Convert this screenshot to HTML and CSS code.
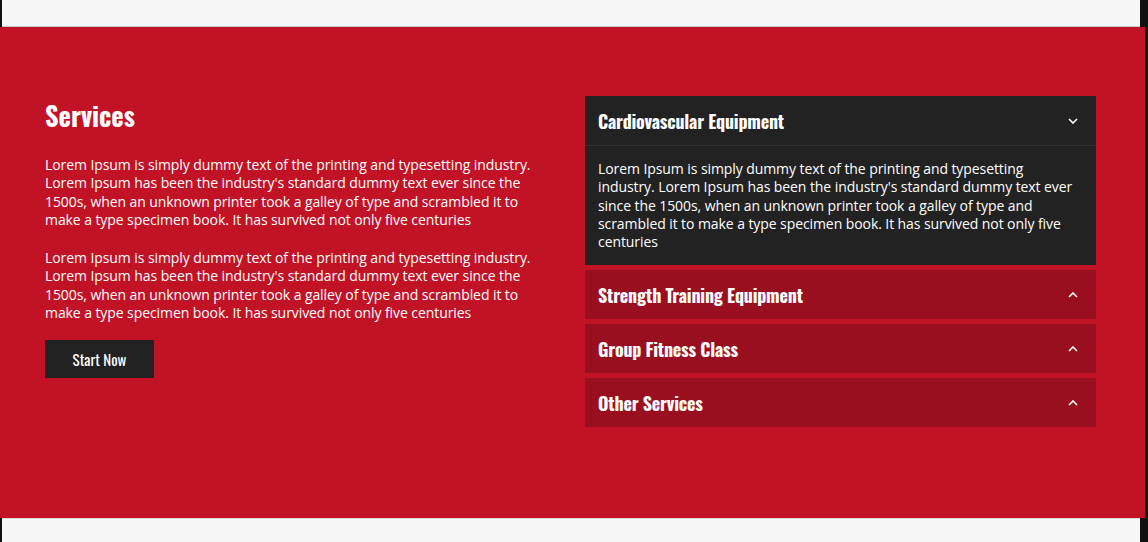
FILE: index.html
```html
<!DOCTYPE html>
<html lang="en">
<head>
<meta charset="utf-8">
<title>Services</title>
<link rel="stylesheet" href="styles.css">
</head>
<body>
<div class="strip strip-top"></div>
<section class="services">
  <div class="intro">
    <h2 class="title">Services</h2>
    <p class="text">Lorem Ipsum is simply dummy text of the printing and typesetting industry. Lorem Ipsum has been the industry's standard dummy text ever since the 1500s, when an unknown printer took a galley of type and scrambled it to make a type specimen book. It has survived not only five centuries</p>
    <p class="text last">Lorem Ipsum is simply dummy text of the printing and typesetting industry. Lorem Ipsum has been the industry's standard dummy text ever since the 1500s, when an unknown printer took a galley of type and scrambled it to make a type specimen book. It has survived not only five centuries</p>
    <a class="btn" href="#">Start Now</a>
  </div>
  <div class="accordion">
    <div class="item open">
      <div class="item-head">
        <span class="item-title">Cardiovascular Equipment</span>
        <svg class="chev" width="10" height="6" viewBox="0 0 10 6"><path d="M1 1l4 4 4-4" fill="none" stroke="#fff" stroke-width="1.6"/></svg>
      </div>
      <div class="item-body">Lorem Ipsum is simply dummy text of the printing and typesetting industry. Lorem Ipsum has been the industry's standard dummy text ever since the 1500s, when an unknown printer took a galley of type and scrambled it to make a type specimen book. It has survived not only five centuries</div>
    </div>
    <div class="item">
      <div class="item-head">
        <span class="item-title">Strength Training Equipment</span>
        <svg class="chev" width="10" height="6" viewBox="0 0 10 6"><path d="M1 5l4-4 4 4" fill="none" stroke="#fff" stroke-width="1.6"/></svg>
      </div>
    </div>
    <div class="item">
      <div class="item-head">
        <span class="item-title">Group Fitness Class</span>
        <svg class="chev" width="10" height="6" viewBox="0 0 10 6"><path d="M1 5l4-4 4 4" fill="none" stroke="#fff" stroke-width="1.6"/></svg>
      </div>
    </div>
    <div class="item">
      <div class="item-head">
        <span class="item-title">Other Services</span>
        <svg class="chev" width="10" height="6" viewBox="0 0 10 6"><path d="M1 5l4-4 4 4" fill="none" stroke="#fff" stroke-width="1.6"/></svg>
      </div>
    </div>
  </div>
</section>
<div class="strip strip-bottom"></div>
</body>
</html>
```
FILE: styles.css
```css
html, body {
  margin: 0;
  padding: 0;
}
body {
  background: #111;
  font-family: "Open Sans", "DejaVu Sans", sans-serif;
  width: 1148px;
  height: 542px;
  overflow: hidden;
}
.strip {
  width: 1138px;
  margin-left: 2px;
  height: 27px;
  background: #f7f7f7;
}
.strip-top {
  height: 26px;
  border-bottom: 1px solid #c9c9c9;
}
.strip-bottom {
  height: 23px;
  border-top: 1px solid #d9d9d9;
}
.services {
  width: 1145px;
  height: 491px;
  box-sizing: border-box;
  background: #c11226;
  padding: 69px 49px 0 45px;
  display: grid;
  grid-template-columns: 1fr 511px;
  column-gap: 30px;
  align-items: start;
}
.title, .btn, .item-title {
  font-family: "Oswald", "Liberation Sans Narrow", "DejaVu Sans Condensed", sans-serif;
}
.title {
  margin: 0 0 22px;
  padding-top: 2px;
  color: #fff;
  font-size: 26.3px;
  font-weight: 700;
  line-height: 36px;
}
.text {
  margin: 0 0 20px;
  color: #fff;
  font-size: 14px;
  line-height: 18.3px;
  letter-spacing: -0.08px;
}
.text.last {
  margin-bottom: 18px;
}
.btn {
  display: inline-flex;
  align-items: center;
  justify-content: center;
  width: 109px;
  height: 38px;
  background: #222;
  color: #fff;
  text-decoration: none;
  font-size: 15px;
  font-weight: 400;
}
.accordion {
  display: flex;
  flex-direction: column;
  gap: 5px;
}
.item {
  background: #9a0f1f;
}
.item.open {
  background: #222;
}
.item-head {
  height: 49px;
  display: flex;
  align-items: center;
  justify-content: space-between;
  padding: 0 18px 0 13px;
}
.item.open .item-head {
  border-bottom: 1px solid #303030;
}
.item-title {
  color: #fff;
  font-size: 18px;
  font-weight: 700;
  letter-spacing: -0.2px;
}
.chev {
  display: block;
}
.item-body {
  color: #fff;
  font-size: 14px;
  line-height: 18.3px;
  letter-spacing: -0.08px;
  padding: 14px 14px 14px 13px;
}
```
